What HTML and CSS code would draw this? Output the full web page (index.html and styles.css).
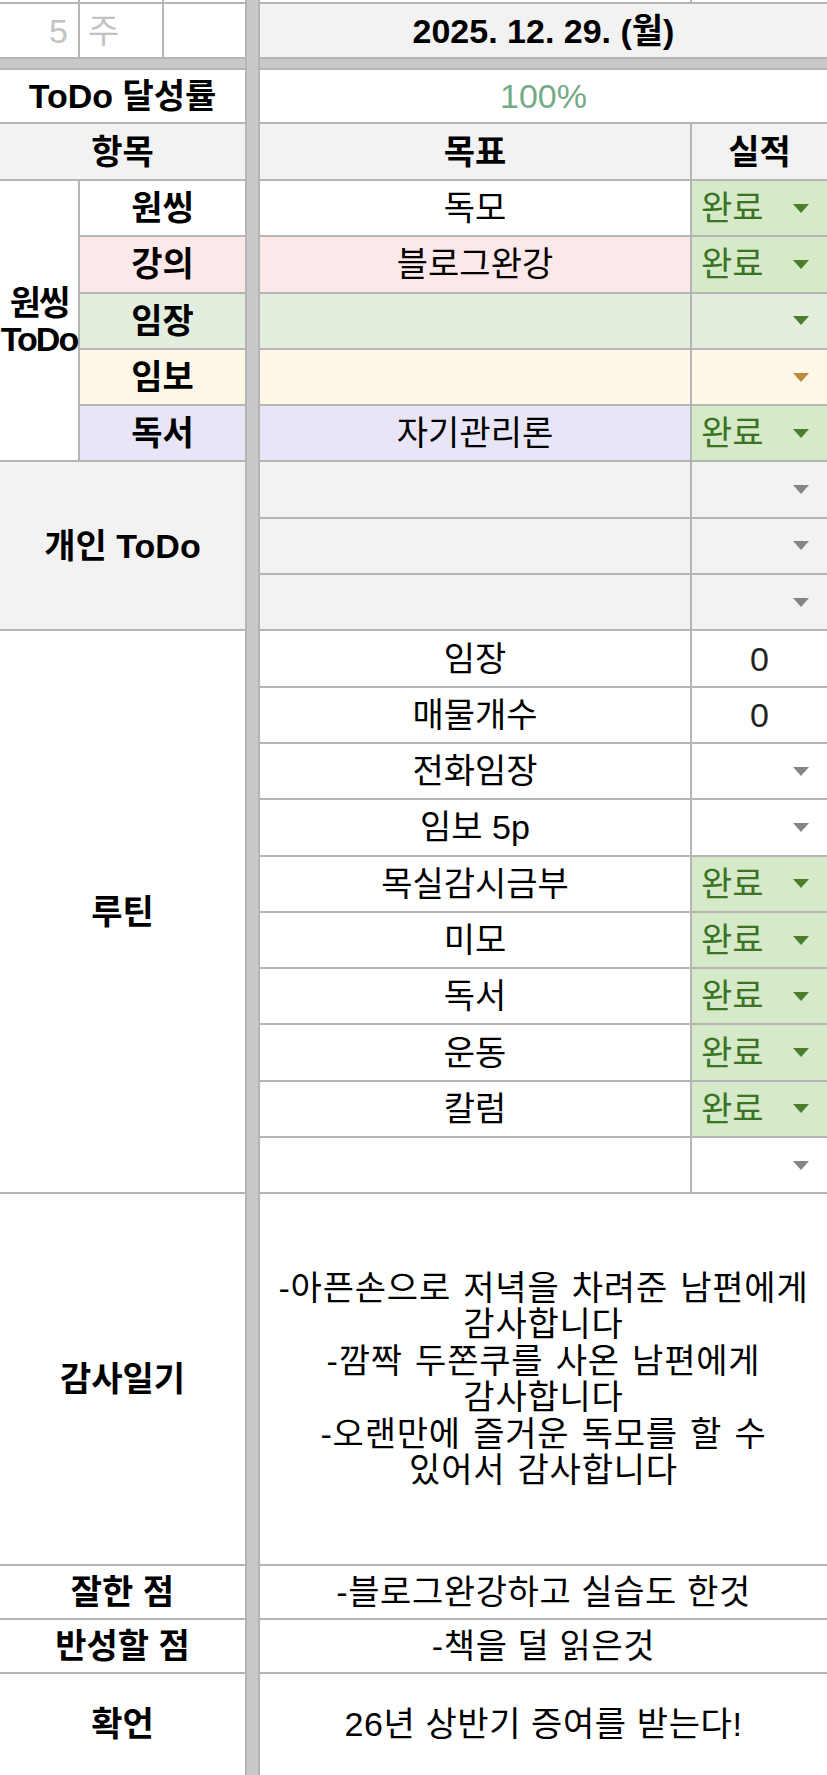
FILE: index.html
```html
<!DOCTYPE html>
<html lang="ko">
<head>
<meta charset="utf-8">
<title>주간 ToDo</title>
<link rel="stylesheet" href="styles.css">
</head>
<body>
<div class="sheet">
  <div class="divider"></div>

  <!-- partial previous row -->
  <div class="cell"></div>
  <div class="cell"></div>
  <div class="cell"></div>
  <div class="cell"></div>
  <div class="cell"></div>

  <!-- date row -->
  <div class="cell week-num">5</div>
  <div class="cell week-label">주</div>
  <div class="cell"></div>
  <div class="cell span2 gray bold">2025. 12. 29. (월)</div>

  <!-- band -->
  <div class="band span3"></div>
  <div class="band span2"></div>

  <!-- rate -->
  <div class="cell span3 bold">ToDo 달성률</div>
  <div class="cell span2 rate">100%</div>

  <!-- header -->
  <div class="cell span3 gray bold">항목</div>
  <div class="cell gray bold">목표</div>
  <div class="cell gray bold">실적</div>

  <!-- 원씽 ToDo -->
  <div class="cell rows5 bold group-label">원씽<br>ToDo</div>
  <div class="cell span2 bold">원씽</div>
  <div class="cell">독모</div>
  <div class="cell status done">완료<span class="arrow arrow-green"></span></div>

  <div class="cell span2 bold pink">강의</div>
  <div class="cell pink">블로그완강</div>
  <div class="cell status done">완료<span class="arrow arrow-green"></span></div>

  <div class="cell span2 bold green">임장</div>
  <div class="cell green"></div>
  <div class="cell status empty green"><span class="arrow arrow-green"></span></div>

  <div class="cell span2 bold yellow">임보</div>
  <div class="cell yellow"></div>
  <div class="cell status empty yellow"><span class="arrow arrow-brown"></span></div>

  <div class="cell span2 bold lavender">독서</div>
  <div class="cell lavender">자기관리론</div>
  <div class="cell status done">완료<span class="arrow arrow-green"></span></div>

  <!-- 개인 ToDo -->
  <div class="cell span3 rows3 gray bold">개인 ToDo</div>
  <div class="cell gray"></div>
  <div class="cell status empty gray"><span class="arrow arrow-gray"></span></div>
  <div class="cell gray"></div>
  <div class="cell status empty gray"><span class="arrow arrow-gray"></span></div>
  <div class="cell gray"></div>
  <div class="cell status empty gray"><span class="arrow arrow-gray"></span></div>

  <!-- 루틴 -->
  <div class="cell span3 rows10 bold">루틴</div>
  <div class="cell">임장</div>
  <div class="cell number">0</div>
  <div class="cell">매물개수</div>
  <div class="cell number">0</div>
  <div class="cell">전화임장</div>
  <div class="cell status empty"><span class="arrow arrow-gray"></span></div>
  <div class="cell">임보 5p</div>
  <div class="cell status empty"><span class="arrow arrow-gray"></span></div>
  <div class="cell">목실감시금부</div>
  <div class="cell status done">완료<span class="arrow arrow-green"></span></div>
  <div class="cell">미모</div>
  <div class="cell status done">완료<span class="arrow arrow-green"></span></div>
  <div class="cell">독서</div>
  <div class="cell status done">완료<span class="arrow arrow-green"></span></div>
  <div class="cell">운동</div>
  <div class="cell status done">완료<span class="arrow arrow-green"></span></div>
  <div class="cell">칼럼</div>
  <div class="cell status done">완료<span class="arrow arrow-green"></span></div>
  <div class="cell"></div>
  <div class="cell status empty"><span class="arrow arrow-gray"></span></div>

  <!-- 감사일기 -->
  <div class="cell span3 bold">감사일기</div>
  <div class="cell span2 diary">-아픈손으로 저녁을 차려준 남편에게<br>감사합니다<br>-깜짝 두쫀쿠를 사온 남편에게<br>감사합니다<br>-오랜만에 즐거운 독모를 할 수<br>있어서 감사합니다</div>

  <div class="cell span3 bold">잘한 점</div>
  <div class="cell span2 wide">-블로그완강하고 실습도 한것</div>

  <div class="cell span3 bold">반성할 점</div>
  <div class="cell span2 wide">-책을 덜 읽은것</div>

  <div class="cell span3 bold">확언</div>
  <div class="cell span2 wide">26년 상반기 증여를 받는다!</div>
</div>
</body>
</html>
```

FILE: styles.css
```css
html, body {
  margin: 0;
  padding: 0;
  background: #ffffff;
  overflow: hidden;
}

.sheet {
  width: 827px;
  height: 1775px;
  display: grid;
  grid-template-columns: 78px 82px 81px 11px 430px 1fr;
  grid-template-rows: 2px 53px 9px 52px 55px repeat(18, 54.3px) 369.4px 52px 52px 101px;
  gap: 2px;
  background: #b5b5b5;
  font-family: "Liberation Sans", "Noto Sans CJK KR", sans-serif;
  font-size: 34px;
  color: #000;
  overflow: hidden;
}

.divider {
  grid-column: 4;
  grid-row: 1 / -1;
  background: #c9c9c9;
}

.band {
  background: #c9c9c9;
}

.cell {
  background: #ffffff;
  display: flex;
  align-items: center;
  justify-content: center;
  text-align: center;
  white-space: nowrap;
  line-height: 36px;
  overflow: visible;
  min-width: 0;
}

.span2 { grid-column: span 2; }
.span3 { grid-column: span 3; }
.rows3 { grid-row: span 3; }
.rows5 { grid-row: span 5; }
.rows10 { grid-row: span 10; }

.bold { font-weight: 700; }

.gray { background: #f2f2f2; }
.pink { background: #fce8e8; }
.green { background: #e4eedf; }
.yellow { background: #fff8e6; }
.lavender { background: #e8e5f6; }

.week-num {
  justify-content: flex-end;
  padding-right: 10px;
  color: #c2c2c2;
}

.week-label {
  justify-content: flex-start;
  padding-left: 8px;
  color: #c2c2c2;
}

.rate {
  color: #74ab86;
}

.group-label {
  line-height: 36px;
  letter-spacing: -2px;
}

.status {
  justify-content: space-between;
  padding: 0 18px 0 9px;
}

.status.empty {
  justify-content: flex-end;
}

.done {
  background: #d6eac9;
  color: #3a7324;
}

.number {
  color: #222;
}

.arrow {
  width: 0;
  height: 0;
  border-left: 8.5px solid transparent;
  border-right: 8.5px solid transparent;
  border-top: 9px solid #808080;
}

.arrow-green { border-top-color: #4a7d2c; }
.arrow-brown { border-top-color: #c08a3c; }
.arrow-gray { border-top-color: #858585; }

.diary {
  white-space: normal;
  line-height: 36.5px;
  letter-spacing: 0.8px;
  word-spacing: 2px;
}

.wide {
  letter-spacing: 0.6px;
}
```
